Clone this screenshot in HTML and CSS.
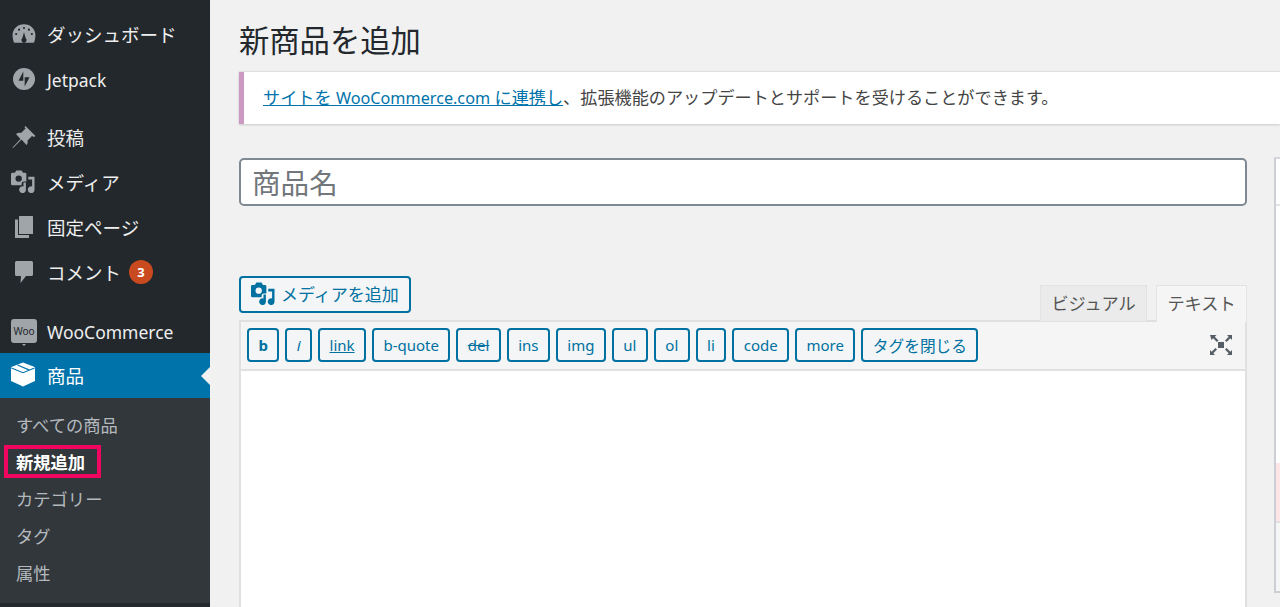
FILE: index.html
```html
<!DOCTYPE html>
<html lang="ja">
<head>
<meta charset="utf-8">
<title>新商品を追加</title>
<link rel="stylesheet" href="styles.css">
</head>
<body>
<div class="app">
  <nav class="side">
    <ul class="menu">
      <li class="item"><svg class="ico" viewBox="0 0 22 20"><path d="M11 1C5 1 .5 5.500 .5 11c0 2 .3 4 1 6 .2.600.7 1 1.300 1h16.400c.6 0 1.100-.4 1.300-1 .7-2 1-4 1-6C21.500 5.500 17 1 11 1zM11 18a2.500 2.500 0 0 1-1.500-4.400L11 8.500l1.500 5.100A2.500 2.500 0 0 1 11 18z" fill-rule="evenodd"/><g fill="#23282d"><circle cx="11" cy="4.500" r="1"/><circle cx="6.500" cy="6" r="1"/><circle cx="15.500" cy="6" r="1"/><circle cx="3.800" cy="10" r="1"/><circle cx="18.200" cy="10" r="1"/></g></svg><span>ダッシュボード</span></li>
      <li class="item"><svg class="ico" viewBox="0 0 22 22"><circle cx="11" cy="11" r="11"/><path fill="#23282d" d="M10.300 3.500v9.300H5.500zM11.700 18.500V9.200h4.800z"/></svg><span class="lat">Jetpack</span></li>
      <li class="item gap"><svg class="ico" viewBox="0 0 23 22"><path d="M13 0L23 10L21.500 11L19.500 10L15 14.500C15.500 16.500 15 18 14 19L9 13.500L.5 22L0 21.500L8 13L3.500 8C5 7 6.500 6.500 8.500 7L13 2.500L12 1z"/></svg><span>投稿</span></li>
      <li class="item"><svg class="ico wide" viewBox="0 0 25 24"><path d="M1.500 3H4L5.500.5h5.500L12.500 3h2A1.500 1.500 0 0 1 16 4.500V12h-2.500A2.500 2.500 0 0 0 11 14.500V16H1.500A1.500 1.500 0 0 1 0 14.500V4.500A1.500 1.500 0 0 1 1.500 3z"/><circle cx="8" cy="9" r="3.300" fill="#23282d"/><path d="M18 7h6.500v13.500a3.500 3.500 0 1 1-2.500-3.300V10h-4zM15.500 13v7.500a3.500 3.500 0 1 1-2.500-3.300V13z"/></svg><span>メディア</span></li>
      <li class="item"><svg class="ico" viewBox="0 0 18 22"><path d="M4.500 0h13a.5.500 0 0 1 .5.500V18H4V.500a.5.500 0 0 1 .5-.5z"/><path d="M0 3.500h3V19h11v3H.5a.5.500 0 0 1-.5-.5z"/></svg><span>固定ページ</span></li>
      <li class="item"><svg class="ico" viewBox="0 0 18 22"><path d="M1.500 0h15A1.500 1.500 0 0 1 18 1.500v12a1.500 1.500 0 0 1-1.500 1.500H11l-5.500 7 .5-7H1.500A1.500 1.500 0 0 1 0 13.500v-12A1.500 1.500 0 0 1 1.500 0z"/></svg><span>コメント</span><b class="badge">3</b></li>
      <li class="item gap2"><span class="woo"><span class="woo-t">Woo</span></span><span class="lat">WooCommerce</span></li>
      <li class="item active"><svg class="ico wide" viewBox="0 0 26 26"><path d="M13 0L25 4.500Q26 5 26 6V20L13 26L0 20V6Q0 5 1 4.500z"/><path d="M.5 6L13 11L25.500 6M7 2.800L19.500 8" fill="none" stroke="#0073aa" stroke-width="1.200"/></svg><span>商品</span></li>
    </ul>
    <ul class="sub">
      <li class="sub-item">すべての商品</li>
      <li class="sub-item current"><span class="mark">新規追加</span></li>
      <li class="sub-item">カテゴリー</li>
      <li class="sub-item">タグ</li>
      <li class="sub-item">属性</li>
    </ul>
  </nav>
  <main class="content">
    <h1 class="title">新商品を追加</h1>
    <div class="notice"><a class="link">サイトを <span class="lat-n">WooCommerce.com</span> に連携し</a>、拡張機能のアップデートとサポートを受けることができます。</div>
    <div class="columns">
      <section class="editor-col">
        <div class="name-input">商品名</div>
        <div class="editor-head">
          <div class="media-btn"><svg class="media-ico" viewBox="0 0 25 24"><path d="M1.500 3H4L5.500.5h5.500L12.500 3h2A1.500 1.500 0 0 1 16 4.500V12h-2.500A2.500 2.500 0 0 0 11 14.500V16H1.500A1.500 1.500 0 0 1 0 14.500V4.500A1.500 1.500 0 0 1 1.500 3z"/><circle cx="8" cy="9" r="3.300" fill="#f3f5f6"/><path d="M18 7h6.500v13.500a3.500 3.500 0 1 1-2.500-3.300V10h-4zM15.500 13v7.500a3.500 3.500 0 1 1-2.500-3.300V13z"/></svg>メディアを追加</div>
          <div class="tabs"><span class="tab">ビジュアル</span><span class="tab on">テキスト</span></div>
        </div>
        <div class="editor">
          <div class="toolbar">
            <span class="qt bold">b</span>
            <span class="qt ital">i</span>
            <span class="qt under">link</span>
            <span class="qt">b-quote</span>
            <span class="qt strike">del</span>
            <span class="qt">ins</span>
            <span class="qt">img</span>
            <span class="qt">ul</span>
            <span class="qt">ol</span>
            <span class="qt">li</span>
            <span class="qt">code</span>
            <span class="qt">more</span>
            <span class="qt ja">タグを閉じる</span>
            <svg class="full" viewBox="0 0 22 20"><path d="M0 0h6.500L4.800 1.700 8.500 5.400 6.900 7 3.200 3.300 1.500 5zM22 0v5l-1.700-1.700L16.600 7 15 5.400l3.700-3.700L17 0zM0 20v-5l1.700 1.700L5.400 13 7 14.600l-3.700 3.700L5 20zM22 20h-5l1.700-1.700L15 14.600l1.600-1.600 3.700 3.700L22 15zM8 7h6v6H8z"/></svg>
          </div>
          <div class="textarea"></div>
        </div>
      </section>
      <aside class="panel">
        <div class="panel-head"></div>
        <div class="panel-body"></div>
        <div class="panel-pink"></div>
        <div class="panel-foot"></div>
      </aside>
    </div>
  </main>
</div>
</body>
</html>
```
FILE: styles.css
```css
* { box-sizing: border-box; }
html, body { margin: 0; height: 607px; overflow: hidden; background: #f1f1f1; }
body { font-family: "Noto Sans", "Noto Sans CJK JP", sans-serif; color: #444; }
ul { list-style: none; margin: 0; padding: 0; }
.app { display: flex; height: 607px; }

.side { flex: 0 0 210px; background: #23282d; padding-top: 11px; display: flex; flex-direction: column; }
.item { height: 45px; display: flex; align-items: center; padding-left: 12px; font-size: 18.500px; color: #eee; }
.lat { font-size: 17.500px; padding-top: 2px; }
.gap { margin-top: 13px; }
.gap2 { margin-top: 14px; }
.ico { flex: 0 0 24px; width: 24px; height: 22px; margin-right: 11px; fill: #a0a5aa; }
.ico.wide { height: 25px; margin-left: -1px; margin-right: 12px; }
.badge { display: flex; align-items: center; justify-content: center; width: 24px; height: 24px; margin-left: 8px; border-radius: 50%; background: #ca4a1f; color: #fff; font-size: 13px; font-weight: 700; }
.woo { flex: 0 0 26px; width: 26px; height: 24px; margin-right: 10px; margin-left: -1px; border-radius: 3px; background: #a0a5aa; display: flex; align-items: center; justify-content: center; position: relative; }
.woo::after { content: ""; position: absolute; left: 11px; bottom: -3px; border: 2px solid transparent; border-top-color: #a0a5aa; border-bottom: 0; }
.woo-t { color: #23282d; font-size: 10px; font-weight: 400; }
.active { background: #0073aa; color: #fff; position: relative; padding-bottom: 2px; }
.active .ico { fill: #fff; }
.active::after { content: ""; position: absolute; right: 0; top: 14px; border: 9px solid transparent; border-right-color: #f1f1f1; border-left: 0; }
.sub { flex: 1; background: #32373c; padding-top: 8.500px; margin-bottom: 4px; }
.sub-item { height: 36.800px; display: flex; align-items: center; padding-left: 16px; font-size: 17.300px; color: #b4b9be; }
.current { padding-left: 4px; color: #fff; font-weight: 700; }
.mark { border: 4px solid #f0065f; padding: 2px 12px 0 8px; line-height: 23px; }

.content { flex: 1; min-width: 0; padding-left: 29px; }
.title { margin: 0; padding-top: 20px; height: 72px; font-size: 30.300px; line-height: 42px; font-weight: 400; color: #23282d; }
.notice { height: 52px; background: #fff; border-left: 5px solid #cc99c2; box-shadow: 0 1px 2px rgba(0,0,0,.16), 0 -1px 1px rgba(0,0,0,.06); padding-left: 19px; font-size: 17.150px; line-height: 51px; color: #444; white-space: nowrap; }
.link { color: #0073aa; text-decoration: underline; }
.lat-n { font-size: 16.200px; }
.columns { display: flex; gap: 27px; margin-top: 34px; }
.editor-col { flex: 0 0 1008px; }
.name-input { height: 48px; background: #fff; border: 2px solid #7e8993; border-radius: 5px; padding-left: 11px; font-size: 28.600px; line-height: 46px; color: #72777c; }
.editor-head { display: flex; justify-content: space-between; align-items: flex-end; margin-top: 70px; height: 45px; }
.media-btn { align-self: flex-start; width: 172px; height: 37px; display: flex; align-items: center; gap: 4px; padding: 0 0 2px 10px; border: 2px solid #0071a1; border-radius: 4px; background: #f3f5f6; color: #0071a1; font-size: 17px; white-space: nowrap; }
.media-ico { width: 24px; height: 23px; fill: #0071a1; margin-right: 2px; }
.tabs { display: flex; gap: 9px; align-items: flex-end; }
.tab { height: 36px; padding: 0 10px; background: #ebebeb; border: 1px solid #e3e3e3; border-bottom: 0; font-size: 17.200px; line-height: 35px; color: #555; width: 107px; text-align: center; }
.tab.on { width: 91px; height: 37px; background: #f5f5f5; margin-bottom: -1px; position: relative; }
.editor { border: 2px solid #dfe0e1; height: 300px; margin-top: -1px; border-bottom: 0; background: #fff; }
.toolbar { display: flex; align-items: center; gap: 5.850px; height: 49px; padding: 6px 6px 7px 6px; background: #f5f5f5; border-bottom: 2px solid #e1e1e1; position: relative; }
.qt { height: 34px; padding: 0 9.500px; display: flex; align-items: center; background: #f3f5f6; border: 2px solid #0071a1; border-radius: 4px; color: #0071a1; font-size: 15px; white-space: nowrap; }
.ja { font-size: 15.700px; }
.bold { font-weight: 700; }
.ital { font-style: italic; }
.under { text-decoration: underline; }
.strike { text-decoration: line-through; }
.full { width: 22px; height: 20px; margin-left: auto; margin-right: 7px; fill: #555d66; }
.textarea { height: 240px; background: #fff; }

.panel { flex: 1; border-top: 2px solid #d5d7da; border-left: 2px solid #ccd0d4; margin-top: -1px; height: 436px; background: #fff; display: flex; flex-direction: column; border-bottom: 2px solid #ccd0d4; }
.panel-head { height: 47px; border-bottom: 2px solid #e2e4e7; }
.panel-body { flex: 1; }
.panel-pink { height: 58px; background: #fde6e5; }
.panel-foot { height: 70px; background: #f5f6f6; border-top: 2px solid #dfe1e3; }
```
